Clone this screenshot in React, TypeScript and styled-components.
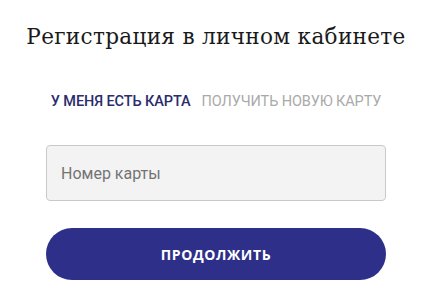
import React, { useState } from "react";
import styled, { createGlobalStyle } from "styled-components";

const GlobalStyle = createGlobalStyle`
  html, body {
    margin: 0;
    padding: 0;
    background: #ffffff;
  }
  body {
    font-family: Roboto, "Noto Sans", sans-serif;
  }
`;

const Wrapper = styled.div`
  width: 432px;
  height: 300px;
  display: flex;
  flex-direction: column;
  align-items: center;
  box-sizing: border-box;
  padding-top: 22px;
`;

const Title = styled.h1`
  margin: 0;
  font-family: "DejaVu Serif", "Liberation Serif", serif;
  font-weight: 400;
  font-size: 21.6px;
  line-height: 30px;
  color: #1a1a1a;
  letter-spacing: 0.3px;
`;

const Tabs = styled.div`
  display: flex;
  gap: 11px;
  margin-top: 42px;
`;

const Tab = styled.button<{ $active?: boolean }>`
  border: none;
  background: none;
  padding: 0;
  font-family: Roboto, sans-serif;
  font-size: 14.5px;
  line-height: 16px;
  letter-spacing: -0.1px;
  text-transform: uppercase;
  cursor: pointer;
  color: ${(p) => (p.$active ? "#2a2c6b" : "#a9a9a9")};
  font-weight: ${(p) => (p.$active ? 500 : 400)};
`;

const Input = styled.input`
  margin-top: 35px;
  width: 340px;
  height: 56px;
  box-sizing: border-box;
  background: #f3f3f3;
  border: 1px solid #c9c9c9;
  border-radius: 4px;
  padding: 0 14px;
  font-family: Roboto, sans-serif;
  font-size: 16px;
  color: #333;
  outline: none;
  &::placeholder {
    color: #737373;
  }
`;

const Button = styled.button`
  margin-top: 27px;
  width: 340px;
  height: 52px;
  border: none;
  border-radius: 26px;
  background: #2e2f89;
  color: #ffffff;
  font-family: "Open Sans", Roboto, sans-serif;
  font-weight: 700;
  font-size: 14px;
  letter-spacing: 0.6px;
  text-transform: uppercase;
  cursor: pointer;
`;

export default function App() {
  const [tab, setTab] = useState(0);
  return (
    <>
      <GlobalStyle />
      <Wrapper>
        <Title>Регистрация в личном кабинете</Title>
        <Tabs>
          <Tab $active={tab === 0} onClick={() => setTab(0)}>
            У меня есть карта
          </Tab>
          <Tab $active={tab === 1} onClick={() => setTab(1)}>
            Получить новую карту
          </Tab>
        </Tabs>
        <Input placeholder="Номер карты" />
        <Button>Продолжить</Button>
      </Wrapper>
    </>
  );
}
